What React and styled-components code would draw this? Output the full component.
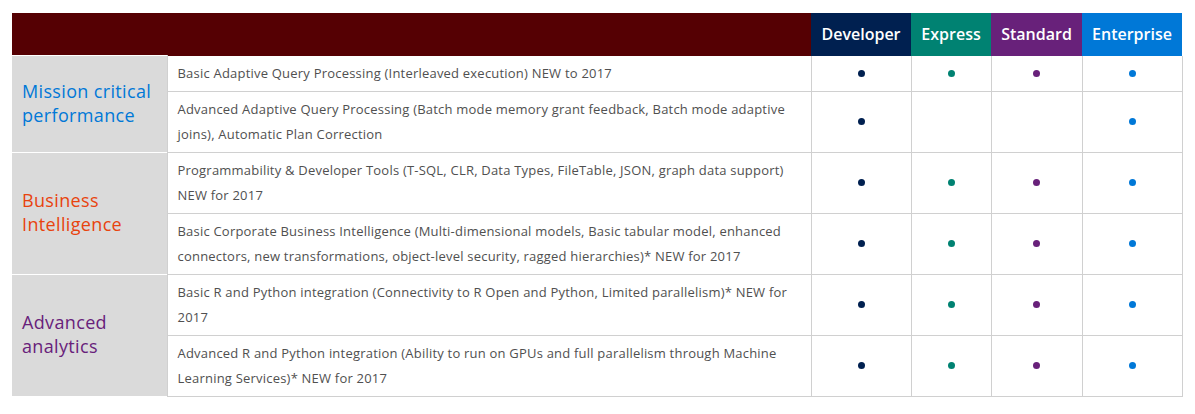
import React from "react";
import styled, { createGlobalStyle } from "styled-components";

const Global = createGlobalStyle`
  html, body { margin: 0; padding: 0; background: #fff; }
  body { font-family: "Open Sans", "Noto Sans", Arial, sans-serif; }
`;

const Wrap = styled.div`
  padding: 13px 13px 0 12px;
`;

const Table = styled.table`
  border-collapse: collapse;
  table-layout: fixed;
  width: 1170px;
`;

const HeadCell = styled.th`
  background: ${(p) => p.$bg};
  color: #fff;
  height: 42px;
  padding: 0;
  font-size: 16px;
  font-weight: 600;
  text-align: center;
  vertical-align: middle;
  border: none;
`;

const CatCell = styled.td`
  background: #dadada;
  color: ${(p) => p.$color};
  font-size: 18px;
  letter-spacing: 0.35px;
  line-height: 24px;
  padding: 0 10px 2px 10px;
  vertical-align: middle;
  border-top: 1px solid #fff;
  border-right: 1px solid #d0d0d0;
`;

const FeatureCell = styled.td`
  color: #505050;
  font-size: 13px;
  letter-spacing: 0.21px;
  line-height: 25px;
  padding: 5px 10px 5px 10px;
  border: 1px solid #d0d0d0;
  border-top: ${(p) => (p.$first ? "none" : "1px solid #d0d0d0")};
  vertical-align: middle;
`;

const DotCell = styled.td`
  border: 1px solid #d0d0d0;
  border-top: ${(p) => (p.$first ? "none" : "1px solid #d0d0d0")};
  text-align: center;
  vertical-align: middle;
  padding: 0;
`;

const Dot = styled.span`
  display: block;
  margin: 0 auto;
  width: 7px;
  height: 7px;
  border-radius: 50%;
  background: ${(p) => p.$color};
`;

const editions = [
  { name: "Developer", color: "#002050", width: 100 },
  { name: "Express", color: "#008272", width: 80 },
  { name: "Standard", color: "#68217a", width: 91 },
  { name: "Enterprise", color: "#0078d7", width: 100 },
];

const groups = [
  {
    title: ["Mission critical", "performance"],
    color: "#0078d7",
    rows: [
      { text: "Basic Adaptive Query Processing (Interleaved execution) NEW to 2017", has: [1, 1, 1, 1] },
      {
        text: "Advanced Adaptive Query Processing (Batch mode memory grant feedback, Batch mode adaptive joins), Automatic Plan Correction",
        has: [1, 0, 0, 1],
      },
    ],
  },
  {
    title: ["Business", "Intelligence"],
    color: "#e8430e",
    rows: [
      {
        text: "Programmability & Developer Tools (T-SQL, CLR, Data Types, FileTable, JSON, graph data support) NEW for 2017",
        has: [1, 1, 1, 1],
      },
      {
        text: "Basic Corporate Business Intelligence (Multi-dimensional models, Basic tabular model, enhanced connectors, new transformations, object-level security, ragged hierarchies)* NEW for 2017",
        has: [1, 1, 1, 1],
      },
    ],
  },
  {
    title: ["Advanced", "analytics"],
    color: "#68217a",
    rows: [
      {
        text: "Basic R and Python integration (Connectivity to R Open and Python, Limited parallelism)* NEW for 2017",
        has: [1, 1, 1, 1],
      },
      {
        text: "Advanced R and Python integration (Ability to run on GPUs and full parallelism through Machine Learning Services)* NEW for 2017",
        has: [1, 1, 1, 1],
      },
    ],
  },
];

export default function App() {
  return (
    <Wrap>
      <Global />
      <Table>
        <colgroup>
          <col style={{ width: 155 }} />
          <col style={{ width: 644 }} />
          {editions.map((e) => (
            <col key={e.name} style={{ width: e.width }} />
          ))}
        </colgroup>
        <thead>
          <tr>
            <HeadCell $bg="#550003" colSpan={2} />
            {editions.map((e) => (
              <HeadCell key={e.name} $bg={e.color}>
                {e.name}
              </HeadCell>
            ))}
          </tr>
        </thead>
        <tbody>
          {groups.map((g, gi) =>
            g.rows.map((r, ri) => (
              <tr key={`${gi}-${ri}`}>
                {ri === 0 && (
                  <CatCell rowSpan={g.rows.length} $color={g.color}>
                    {g.title[0]}
                    <br />
                    {g.title[1]}
                  </CatCell>
                )}
                <FeatureCell $first={gi === 0 && ri === 0}>{r.text}</FeatureCell>
                {editions.map((e, ei) => (
                  <DotCell key={e.name} $first={gi === 0 && ri === 0}>
                    {r.has[ei] ? <Dot $color={e.color} /> : null}
                  </DotCell>
                ))}
              </tr>
            ))
          )}
        </tbody>
      </Table>
    </Wrap>
  );
}
